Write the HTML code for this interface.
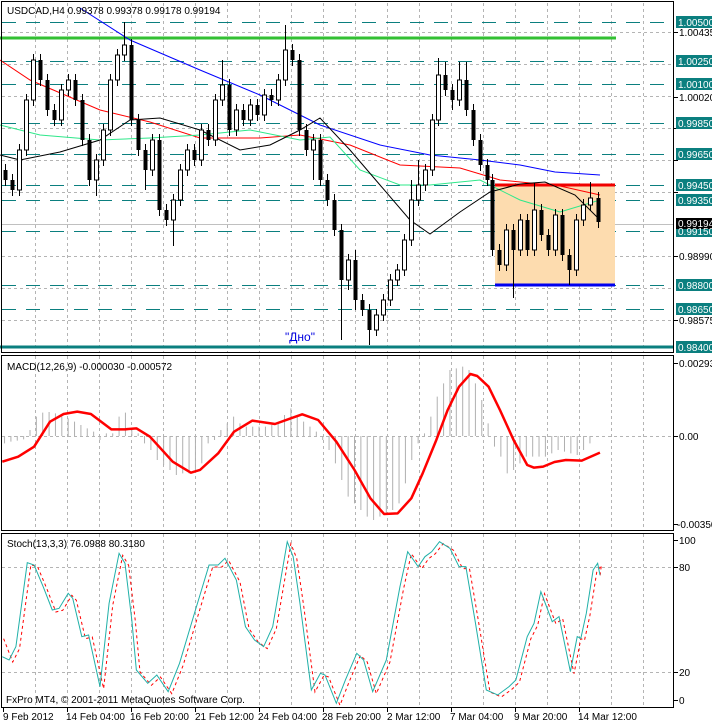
<!DOCTYPE html>
<html><head><meta charset="utf-8"><style>
html,body{margin:0;padding:0;background:#fff;}
svg{display:block;font-family:"Liberation Sans",sans-serif;}
.lbl{font-size:10px;fill:#000;}
.bx{font-size:10px;fill:#fff;}
</style></head><body>
<svg width="712" height="724" viewBox="0 0 712 724" xmlns="http://www.w3.org/2000/svg">
<rect width="712" height="724" fill="#fff"/>
<!-- vertical grid -->
<g stroke="#b4b4b4" stroke-dasharray="3,3" stroke-width="1">
<path d="M35.5 3V352M67.5 3V352M99.5 3V352M131.5 3V352M163.5 3V352M195.5 3V352M227.5 3V352M259.5 3V352M291.5 3V352M323.5 3V352M355.5 3V352M387.5 3V352M419.5 3V352M451.5 3V352M483.5 3V352M515.5 3V352M547.5 3V352M579.5 3V352M611.5 3V352M643.5 3V352"/>
<path d="M35.5 356V530M67.5 356V530M99.5 356V530M131.5 356V530M163.5 356V530M195.5 356V530M227.5 356V530M259.5 356V530M291.5 356V530M323.5 356V530M355.5 356V530M387.5 356V530M419.5 356V530M451.5 356V530M483.5 356V530M515.5 356V530M547.5 356V530M579.5 356V530M611.5 356V530M643.5 356V530"/>
<path d="M35.5 534V706M67.5 534V706M99.5 534V706M131.5 534V706M163.5 534V706M195.5 534V706M227.5 534V706M259.5 534V706M291.5 534V706M323.5 534V706M355.5 534V706M387.5 534V706M419.5 534V706M451.5 534V706M483.5 534V706M515.5 534V706M547.5 534V706M579.5 534V706M611.5 534V706M643.5 534V706"/>
<path d="M2 32.5H673M2 64.5H673M2 96.5H673M2 128.5H673M2 160.5H673M2 192.5H673M2 256.5H673M2 288.5H673M2 320.5H673"/>
<path d="M2 436.5H673M2 567.5H673M2 672.5H673"/>
</g>
<line x1="2" y1="224.5" x2="673" y2="224.5" stroke="#c0c0c0"/>
<!-- teal dashed levels -->
<g stroke="#0b7f7f" stroke-width="1" stroke-dasharray="14,10">
<path d="M2 22.5H670M2 61.5H670M2 84.5H670M2 123.5H670M2 154.5H670M2 185.5H670M2 200.5H670M2 231.5H670M2 285.5H670M2 309.5H670"/>
</g>
<rect x="495" y="185" width="120" height="100" fill="#fddcaf"/>
<line x1="0" y1="38" x2="616" y2="38" stroke="#33c033" stroke-width="3"/>
<line x1="0" y1="347" x2="673" y2="347" stroke="#0b7f7f" stroke-width="3"/>
<line x1="495" y1="185" x2="615" y2="185" stroke="#f00000" stroke-width="3"/>
<line x1="495" y1="285" x2="615" y2="285" stroke="#0000f0" stroke-width="3"/>
<!-- MAs -->
<g fill="none" stroke-width="1">
<polyline stroke="#00f" points="80,8 130,40 200,70 260,95 320,125 380,145 430,155 480,160 520,165 555,172 600,175"/>
<polyline stroke="#f00" points="0,60 30,80 100,110 150,122 200,138 260,138 300,135 350,145 400,165 460,168 500,180 560,186 600,195"/>
<polyline stroke="#2ee88a" points="0,125 40,135 100,140 150,138 200,135 250,130 300,140 330,137 360,170 400,185 430,185 480,180 520,200 560,212 600,200"/>
<polyline stroke="#000" points="0,155 20,160 60,152 100,140 130,120 160,118 200,130 240,150 270,145 300,130 320,118 350,150 380,185 410,220 430,234 460,212 490,192 520,184 545,182 575,195 600,220"/>
</g>
<!-- wicks -->
<path stroke="#000" stroke-width="1" fill="none" d="M5.5 164V186M12.5 174V196M19.5 144V196M26.5 94V156M33.5 54V106M40.5 54V86M47.5 74V116M54.5 104V126M61.5 84V126M68.5 74V96M75.5 74V106M82.5 94V146M89.5 134V186M96.5 154V196M103.5 124V166M110.5 74V136M117.5 49V86M124.5 22V61M131.5 39V126M138.5 114V156M145.5 144V190M152.5 134V176M159.5 134V216M166.5 204V226M173.5 194V246M180.5 164V206M187.5 144V176M194.5 144V166M201.5 124V166M208.5 124V146M215.5 94V146M222.5 60V106M229.5 79V136M236.5 104V136M243.5 104V126M250.5 99V126M257.5 99V121M264.5 89V121M271.5 89V106M278.5 74V106M285.5 25V86M292.5 44V66M299.5 54V136M306.5 124V156M313.5 134V180M320.5 134V186M327.5 174V206M334.5 194V236M341.5 224V340M348.5 254V290M355.5 250V310M362.5 294V316M369.5 304V345M376.5 309V336M383.5 294V321M390.5 274V306M397.5 264V286M404.5 234V276M411.5 180V246M418.5 160V206M425.5 164V191M432.5 114V176M438.5 58V126M445.5 62V96M452.5 84V110M459.5 62V106M466.5 62V116M473.5 104V146M480.5 134V171M487.5 159V186M492.5 174V256M499.5 244V271M506.5 224V271M513.5 224V298M520.5 214V256M527.5 214V256M534.5 183V256M541.5 204V241M548.5 229V256M555.5 209V256M562.5 209V261M569.5 249V285M576.5 214V276M583.5 199V226M590.5 182V211M598.5 192V228"/>
<!-- down bodies -->
<g fill="#000">
<rect x="3.5" y="170" width="4" height="10"/><rect x="10.5" y="180" width="4" height="10"/>
<rect x="38.5" y="60" width="4" height="20"/><rect x="45.5" y="80" width="4" height="30"/><rect x="52.5" y="110" width="4" height="10"/>
<rect x="73.5" y="80" width="4" height="20"/><rect x="80.5" y="100" width="4" height="40"/><rect x="87.5" y="140" width="4" height="40"/>
<rect x="129.5" y="45" width="4" height="75"/><rect x="136.5" y="120" width="4" height="30"/><rect x="143.5" y="150" width="4" height="20"/>
<rect x="157.5" y="140" width="4" height="70"/><rect x="164.5" y="210" width="4" height="10"/><rect x="192.5" y="150" width="4" height="10"/>
<rect x="206.5" y="130" width="4" height="10"/><rect x="227.5" y="85" width="4" height="45"/><rect x="241.5" y="110" width="4" height="10"/>
<rect x="255.5" y="105" width="4" height="10"/><rect x="269.5" y="95" width="4" height="5"/><rect x="290.5" y="50" width="4" height="10"/>
<rect x="297.5" y="60" width="4" height="70"/><rect x="304.5" y="130" width="4" height="20"/><rect x="318.5" y="140" width="4" height="40"/>
<rect x="325.5" y="180" width="4" height="20"/><rect x="332.5" y="200" width="4" height="30"/><rect x="339.5" y="230" width="4" height="50"/>
<rect x="353.5" y="260" width="4" height="40"/><rect x="360.5" y="300" width="4" height="10"/><rect x="367.5" y="310" width="4" height="20"/>
<rect x="443.5" y="75" width="4" height="15"/><rect x="450.5" y="90" width="4" height="10"/><rect x="464.5" y="80" width="4" height="30"/>
<rect x="471.5" y="110" width="4" height="30"/><rect x="478.5" y="140" width="4" height="25"/><rect x="485.5" y="165" width="4" height="15"/>
<rect x="490.5" y="180" width="4" height="70"/><rect x="497.5" y="250" width="4" height="15"/><rect x="511.5" y="230" width="4" height="20"/>
<rect x="525.5" y="220" width="4" height="30"/><rect x="539.5" y="210" width="4" height="25"/><rect x="546.5" y="235" width="4" height="15"/>
<rect x="560.5" y="215" width="4" height="40"/><rect x="567.5" y="255" width="4" height="15"/><rect x="596.5" y="198" width="4" height="24"/>
</g>
<!-- up bodies -->
<g fill="#fff" stroke="#000" stroke-width="1">
<rect x="17.5" y="150" width="4" height="40"/><rect x="24.5" y="100" width="4" height="50"/><rect x="31.5" y="60" width="4" height="40"/>
<rect x="59.5" y="90" width="4" height="30"/><rect x="66.5" y="80" width="4" height="10"/><rect x="94.5" y="160" width="4" height="20"/>
<rect x="101.5" y="130" width="4" height="30"/><rect x="108.5" y="80" width="4" height="50"/><rect x="115.5" y="55" width="4" height="25"/>
<rect x="122.5" y="45" width="4" height="10"/><rect x="150.5" y="140" width="4" height="30"/><rect x="171.5" y="200" width="4" height="20"/>
<rect x="178.5" y="170" width="4" height="30"/><rect x="185.5" y="150" width="4" height="20"/><rect x="199.5" y="130" width="4" height="30"/>
<rect x="213.5" y="100" width="4" height="40"/><rect x="220.5" y="85" width="4" height="15"/><rect x="234.5" y="110" width="4" height="20"/>
<rect x="248.5" y="105" width="4" height="15"/><rect x="262.5" y="95" width="4" height="20"/><rect x="276.5" y="80" width="4" height="20"/>
<rect x="283.5" y="50" width="4" height="30"/><rect x="311.5" y="140" width="4" height="10"/><rect x="346.5" y="260" width="4" height="20"/>
<rect x="374.5" y="315" width="4" height="15"/><rect x="381.5" y="300" width="4" height="15"/><rect x="388.5" y="280" width="4" height="20"/>
<rect x="395.5" y="270" width="4" height="10"/><rect x="402.5" y="240" width="4" height="30"/><rect x="409.5" y="200" width="4" height="40"/>
<rect x="416.5" y="185" width="4" height="15"/><rect x="423.5" y="170" width="4" height="15"/><rect x="430.5" y="120" width="4" height="50"/>
<rect x="436.5" y="75" width="4" height="45"/><rect x="457.5" y="80" width="4" height="20"/><rect x="504.5" y="230" width="4" height="35"/>
<rect x="518.5" y="220" width="4" height="30"/><rect x="532.5" y="210" width="4" height="40"/><rect x="553.5" y="215" width="4" height="35"/>
<rect x="574.5" y="220" width="4" height="50"/><rect x="581.5" y="205" width="4" height="15"/><rect x="588.5" y="198" width="4" height="7"/>
</g>
<text x="285" y="341" font-size="12" fill="#0000e0">"Дно"</text>
<text x="7" y="14" class="lbl">USDCAD,H4  0.99378 0.99378 0.99178 0.99194</text>

<!-- MACD -->
<g transform="matrix(0.4545,0,0,0.3333,0,350)">
<path fill="none" stroke="#b0b0b0" stroke-width="1" vector-effect="non-scaling-stroke" d="M10 258V280M24 258V275M38 258V272M52 258V268M66 258V240M80 258V200M94 258V188M108 258V186M122 258V190M136 258V200M150 258V205M164 258V215M178 258V225M192 258V235M206 258V245M220 258V270M234 258V250M248 258V250M262 258V200M276 258V188M290 258V240M304 258V250M318 258V280M332 258V300M346 258V330M360 258V345M374 258V360M388 258V375M402 258V370M416 258V370M430 258V360M444 258V340M458 258V280M472 258V270M486 258V240M500 258V220M514 258V200M528 258V220M542 258V230M556 258V230M570 258V230M584 258V230M598 258V225M612 258V220M626 258V195M640 258V175M654 258V200M668 258V215M682 258V230M696 258V245M710 258V270M724 258V300M738 258V340M752 258V390M766 258V440M780 258V460M794 258V480M808 258V500M822 258V510M836 258V500M850 258V495M864 258V480M878 258V460M892 258V400M906 258V330M920 258V280M934 258V250M948 258V200M962 258V140M976 258V100M990 258V60M1004 258V55M1018 258V50M1032 258V60M1046 258V100M1060 258V150M1074 258V220M1088 258V290M1102 258V320M1116 258V370M1130 258V360M1144 258V340M1158 258V320M1172 258V320M1186 258V320M1200 258V320M1214 258V310M1228 258V300M1242 258V305M1256 258V310M1270 258V315M1284 258V300M1298 258V280"/>
<polyline fill="none" stroke="#f00" stroke-width="2.5" vector-effect="non-scaling-stroke" stroke-linejoin="round" points="5,335 40,320 75,290 110,215 140,192 170,185 200,192 245,238 275,238 300,235 330,260 380,335 420,368 440,360 480,310 515,245 555,212 605,222 640,205 665,193 700,210 740,275 780,360 815,445 845,492 875,490 905,445 930,370 960,270 985,180 1010,110 1035,72 1050,78 1075,110 1100,180 1130,270 1160,345 1175,353 1195,350 1220,336 1245,330 1280,332 1320,308"/>
</g>
<text x="7" y="370" class="lbl">MACD(12,26,9) -0.000030 -0.000572</text>

<!-- Stoch -->
<g transform="matrix(0.4545,0,0,0.3333,0,520)" fill="none" vector-effect="non-scaling-stroke">
<polyline transform="translate(8,6)" stroke="#f00" stroke-width="1" stroke-dasharray="3,3" vector-effect="non-scaling-stroke" points="0,350 20,420 35,380 60,128 75,135 95,200 115,270 130,265 150,220 160,235 180,350 195,345 220,500 240,250 262,100 275,130 290,300 300,450 325,490 345,465 370,515 395,430 430,270 460,135 480,135 495,115 520,180 540,320 560,360 580,380 600,320 615,200 632,65 645,110 660,250 685,510 705,460 715,465 740,550 760,480 785,400 800,420 820,515 850,420 880,200 897,95 920,140 935,110 950,95 967,65 990,85 1010,140 1025,140 1045,300 1070,510 1095,525 1120,500 1135,480 1160,350 1175,310 1190,215 1215,305 1230,290 1255,455 1270,350 1278,355 1290,280 1305,150 1315,130 1312,165"/>
<polyline stroke="#20b0a8" stroke-width="1" vector-effect="non-scaling-stroke" points="5,410 20,420 35,380 60,128 75,135 95,200 115,270 130,265 150,220 160,235 180,350 195,345 220,500 240,250 262,100 275,130 290,300 300,450 325,490 345,465 370,515 395,430 430,270 460,135 480,135 495,115 520,180 540,320 560,360 580,380 600,320 615,200 632,65 645,110 660,250 685,510 705,460 715,465 740,550 760,480 785,400 800,420 820,515 850,420 880,200 897,95 920,140 935,110 950,95 967,65 990,85 1010,140 1025,140 1045,300 1070,510 1095,525 1120,500 1135,480 1160,350 1175,310 1190,215 1215,305 1230,290 1255,455 1270,350 1278,355 1290,280 1305,150 1315,130 1320,165"/>
</g>
<text x="7" y="547" class="lbl">Stoch(13,3,3) 76.0988 80.3180</text>
<text x="6" y="703" class="lbl">FxPro MT4, © 2001-2011 MetaQuotes Software Corp.</text>

<!-- panel borders -->
<g fill="none" stroke="#000" stroke-width="1">
<rect x="1.5" y="1.5" width="672" height="351"/>
<rect x="1.5" y="355.5" width="672" height="175"/>
<rect x="1.5" y="533.5" width="672" height="174"/>
<path d="M674 32.5h4M674 97.5h4M674 128.5h4M674 160.5h4M674 192.5h4M674 256.5h4M674 320.5h4M674 540.5h4M674 567.5h4M674 672.5h4M674 700.5h4M674 436.5h4M674 363.5h4M674 524.5h4"/>
<path d="M3.5 708v4M67.5 708v4M131.5 708v4M195.5 708v4M259.5 708v4M323.5 708v4M387.5 708v4M451.5 708v4M515.5 708v4M579.5 708v4"/>
</g>
<!-- right axis -->
<g class="lbl">
<text x="679" y="36" class="lbl">1.00435</text>
<text x="679" y="101" class="lbl">1.00020</text>
<text x="679" y="260" class="lbl">0.98990</text>
<text x="679" y="324" class="lbl">0.98575</text>
<text x="679" y="367" class="lbl">0.00293</text>
<text x="679" y="440" class="lbl">0.00</text>
<text x="677" y="528" class="lbl">-0.00350</text>
<text x="679" y="544" class="lbl">100</text>
<text x="679" y="571" class="lbl">80</text>
<text x="679" y="676" class="lbl">20</text>
<text x="679" y="704" class="lbl">0</text>
</g>
<g fill="#0b7f7f">
<rect x="676" y="16" width="36" height="12"/><rect x="676" y="55" width="36" height="12"/><rect x="676" y="78" width="36" height="12"/>
<rect x="676" y="117" width="36" height="12"/><rect x="676" y="148" width="36" height="12"/><rect x="676" y="179" width="36" height="12"/>
<rect x="676" y="194" width="36" height="12"/><rect x="676" y="225" width="36" height="12"/><rect x="676" y="279" width="36" height="12"/>
<rect x="676" y="303" width="36" height="12"/><rect x="676" y="341" width="36" height="12"/>
</g>
<rect x="676" y="218" width="36" height="11" fill="#000"/>
<g class="bx">
<text x="678" y="26" class="bx">1.00500</text><text x="678" y="65" class="bx">1.00250</text><text x="678" y="88" class="bx">1.00100</text>
<text x="678" y="127" class="bx">0.99850</text><text x="678" y="158" class="bx">0.99650</text><text x="678" y="189" class="bx">0.99450</text>
<text x="678" y="204" class="bx">0.99350</text><text x="678" y="227" class="bx">0.99194</text><text x="678" y="235" class="bx">0.99150</text>
<text x="678" y="289" class="bx">0.98800</text><text x="678" y="313" class="bx">0.98650</text><text x="678" y="351" class="bx">0.98400</text>
</g>
<!-- time axis -->
<g class="lbl">
<text x="3" y="720" class="lbl">9 Feb 2012</text>
<text x="66" y="720" class="lbl">14 Feb 04:00</text>
<text x="130" y="720" class="lbl">16 Feb 20:00</text>
<text x="195" y="720" class="lbl">21 Feb 12:00</text>
<text x="258" y="720" class="lbl">24 Feb 04:00</text>
<text x="322" y="720" class="lbl">28 Feb 20:00</text>
<text x="387" y="720" class="lbl">2 Mar 12:00</text>
<text x="450" y="720" class="lbl">7 Mar 04:00</text>
<text x="514" y="720" class="lbl">9 Mar 20:00</text>
<text x="578" y="720" class="lbl">14 Mar 12:00</text>
</g>
</svg>
</body></html>
